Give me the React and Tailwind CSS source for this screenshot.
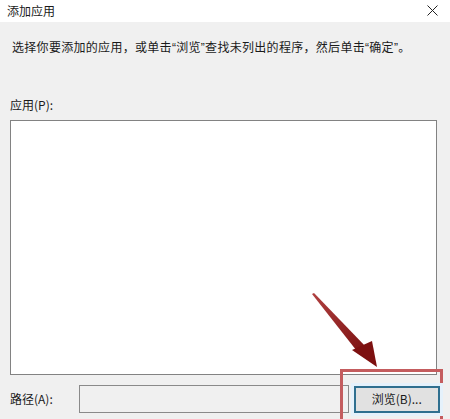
import React from 'react';

const font = { fontFamily: '"Noto Sans CJK SC", "Microsoft YaHei", sans-serif' };

const Q = ({ children }) => (
  <span style={{ fontFamily: '"Liberation Sans", sans-serif' }}>{children}</span>
);

const Arrow = () => (
  <svg className="absolute left-0 top-0 pointer-events-none" width="450" height="419" viewBox="0 0 450 419">
    <defs>
      <linearGradient id="ag" x1="0" y1="0" x2="1" y2="1">
        <stop offset="0" stopColor="#b04040" />
        <stop offset="1" stopColor="#7a0f0f" />
      </linearGradient>
    </defs>
    {/* shaft tapering from tail to head */}
    <polygon points="312,294 314,293 367,348 360,355" fill="url(#ag)" />
    {/* head */}
    <polygon points="352,350 372,341 377,367" fill="#7d1010" />
  </svg>
);

export default function App() {
  return (
    <div className="relative w-[450px] h-[419px] overflow-hidden bg-[#f0f0f0] text-[#1a1a1a]" style={font}>
      {/* title bar */}
      <div className="h-[22px] bg-white flex items-center justify-between pl-[7px] pr-[12px]">
        <span className="text-[12px] leading-none">添加应用</span>
        <svg width="11" height="11" viewBox="0 0 11 11" className="mt-[-2px]">
          <path d="M0.5 0.5 L10.5 10.5 M10.5 0.5 L0.5 10.5" stroke="#222" strokeWidth="1" />
        </svg>
      </div>

      <div className="px-[10px]">
        <p className="mt-[18px] ml-[2px] text-[12px] leading-[14px] tracking-[0.3px]">
          选择你要添加的应用，或单击<Q>“</Q>浏览<Q>”</Q>查找未列出的程序，然后单击<Q>“</Q>确定<Q>”</Q>。
        </p>
        <p className="mt-[43px] text-[12px] leading-[14px]">应用(P):</p>
        <div className="mt-[8px] w-[427px] h-[255px] bg-white border border-[#828282]" />

        <div className="mt-[10px] flex items-center">
          <span className="w-[69px] text-[12px] leading-[14px]">路径(A):</span>
          <div className="w-[272px] h-[28px] border border-[#8a8a8a] bg-[#f0f0f0]" />
          <button className="relative z-10 ml-[5px] w-[87px] h-[27px] bg-[#e1e1e1] border-2 border-[#2f6f8f] text-[12px] leading-none flex items-center justify-center shadow-[0_0_0_3px_#e5f1fb]">
            浏览(B)...
          </button>
        </div>
      </div>

      {/* highlight box */}
      <div className="absolute left-[340px] top-[369px] w-[103px] h-[60px] border-[3px] border-[#c45c5e]" />
      <Arrow />
    </div>
  );
}
